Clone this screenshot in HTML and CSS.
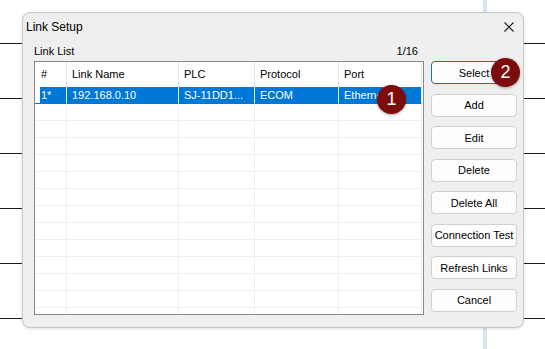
FILE: index.html
```html
<!DOCTYPE html>
<html lang="en">
<head>
  <meta charset="UTF-8">
  <meta name="viewport" content="width=device-width, initial-scale=1.0">
  <title>Link Setup</title>
  <link rel="stylesheet" href="styles.css">
</head>
<body>
<div class="dialog">
  <div class="titlebar">
    <span class="title">Link Setup</span>
    <span class="close">
      <svg width="10" height="10" viewBox="0 0 10 10"><path d="M0.5 0.5 L9.5 9.5 M9.5 0.5 L0.5 9.5" stroke="#1a1a1a" stroke-width="1.1" fill="none"/></svg>
    </span>
  </div>

  <div class="content">
    <div class="list-label">
      <span>Link List</span>
      <span>1/16</span>
    </div>

    <div class="listview">
      <div class="lv-row lv-head">
        <div class="cell">#</div>
        <div class="cell">Link Name</div>
        <div class="cell">PLC</div>
        <div class="cell">Protocol</div>
        <div class="cell">Port</div>
      </div>
      <div class="lv-row selected">
        <div class="cell">1*</div>
        <div class="cell">192.168.0.10</div>
        <div class="cell">SJ-11DD1...</div>
        <div class="cell">ECOM</div>
        <div class="cell">Etherne...</div>
      </div>
      <div class="lv-row"><div class="cell"></div><div class="cell"></div><div class="cell"></div><div class="cell"></div><div class="cell"></div></div>
      <div class="lv-row"><div class="cell"></div><div class="cell"></div><div class="cell"></div><div class="cell"></div><div class="cell"></div></div>
      <div class="lv-row"><div class="cell"></div><div class="cell"></div><div class="cell"></div><div class="cell"></div><div class="cell"></div></div>
      <div class="lv-row"><div class="cell"></div><div class="cell"></div><div class="cell"></div><div class="cell"></div><div class="cell"></div></div>
      <div class="lv-row"><div class="cell"></div><div class="cell"></div><div class="cell"></div><div class="cell"></div><div class="cell"></div></div>
      <div class="lv-row"><div class="cell"></div><div class="cell"></div><div class="cell"></div><div class="cell"></div><div class="cell"></div></div>
      <div class="lv-row"><div class="cell"></div><div class="cell"></div><div class="cell"></div><div class="cell"></div><div class="cell"></div></div>
      <div class="lv-row"><div class="cell"></div><div class="cell"></div><div class="cell"></div><div class="cell"></div><div class="cell"></div></div>
      <div class="lv-row"><div class="cell"></div><div class="cell"></div><div class="cell"></div><div class="cell"></div><div class="cell"></div></div>
      <div class="lv-row"><div class="cell"></div><div class="cell"></div><div class="cell"></div><div class="cell"></div><div class="cell"></div></div>
      <div class="lv-row"><div class="cell"></div><div class="cell"></div><div class="cell"></div><div class="cell"></div><div class="cell"></div></div>
      <div class="lv-row"><div class="cell"></div><div class="cell"></div><div class="cell"></div><div class="cell"></div><div class="cell"></div></div>
      <div class="lv-row"><div class="cell"></div><div class="cell"></div><div class="cell"></div><div class="cell"></div><div class="cell"></div></div>
    </div>

    <div class="buttons">
      <button class="btn default">Select</button>
      <button class="btn">Add</button>
      <button class="btn">Edit</button>
      <button class="btn">Delete</button>
      <button class="btn">Delete All</button>
      <button class="btn">Connection Test</button>
      <button class="btn">Refresh Links</button>
      <button class="btn">Cancel</button>
    </div>
  </div>

  <!-- marcadores numerados -->
  <span class="badge badge-1">1</span>
  <span class="badge badge-2">2</span>
</div>
</body>
</html>
```

FILE: styles.css
```css
* {
  margin: 0;
  padding: 0;
  box-sizing: border-box;
}

body {
  font-family: 'Liberation Sans', Arial, sans-serif;
  font-size: 11px;
  color: #000;
  width: 545px;
  height: 349px;
  overflow: hidden;
  background:
    linear-gradient(#d3e5f4, #d3e5f4) 483px 0 / 4px 100% no-repeat,
    repeating-linear-gradient(to bottom, transparent 0 43px, #1c1c1c 43px 44px, transparent 44px 55px),
    #fff;
  padding: 12px 0 0 22px;
}

.dialog {
  position: relative;
  width: 502px;
  height: 316px;
  background-color: #efefef;
  border: 1px solid #c6c6c6;
  border-radius: 8px;
  box-shadow: 0 1px 3px rgba(0, 0, 0, 0.12);
}

.titlebar {
  height: 29px;
  display: flex;
  justify-content: space-between;
  align-items: center;
  padding: 0 9px 0 3px;
}

.title {
  font-size: 12px;
  margin-top: -1px;
}

.close {
  display: flex;
  margin-top: -1px;
}

.content {
  display: grid;
  grid-template-columns: 390px 86px;
  grid-template-rows: 19px 254px;
  column-gap: 7px;
  padding-left: 11px;
}

.list-label {
  display: flex;
  justify-content: space-between;
  align-items: center;
  padding: 0 6px 0 0;
  margin-top: -2px;
}

.listview {
  grid-column: 1;
  grid-row: 2;
  background-color: #fff;
  border: 1px solid #858a91;
  overflow: hidden;
}

.lv-row {
  display: grid;
  grid-template-columns: 32px 112px 76px 84px 83px;
  height: 17px;
}

.lv-row .cell {
  border-right: 1px solid #efefef;
  border-bottom: 1px solid #efefef;
  padding-left: 5px;
  white-space: nowrap;
  overflow: hidden;
  line-height: 16px;
}

.lv-row .cell:first-child {
  padding-left: 6px;
}

.lv-head {
  height: 25px;
}

.lv-head .cell {
  border-bottom: none;
  border-right-color: #e5e5e5;
  line-height: 25px;
}

.selected .cell {
  background-color: #0078d7;
  color: #fff;
  border-right-color: #e6f0fa;
  border-bottom-color: #0078d7;
}

.selected .cell:first-child {
  background: linear-gradient(to right, #fff 5px, #0078d7 5px);
}

.buttons {
  grid-column: 2;
  grid-row: 2;
  height: 251px;
  display: flex;
  flex-direction: column;
  justify-content: space-between;
}

.btn {
  height: 23px;
  font-family: inherit;
  font-size: 11px;
  color: #000;
  background-color: #fdfdfd;
  border: 1px solid #d0d0d0;
  border-radius: 4px;
}

.btn.default {
  border-color: #1a6fc2;
}

.badge {
  position: absolute;
  width: 29px;
  height: 29px;
  border-radius: 50%;
  background-color: #7d0d0d;
  color: #fff;
  font-size: 18px;
  display: flex;
  justify-content: center;
  align-items: center;
  box-shadow: 0 1px 3px rgba(0, 0, 0, 0.35);
}

.badge-1 {
  left: 354px;
  top: 72px;
}

.badge-2 {
  left: 468px;
  top: 45px;
}
```
